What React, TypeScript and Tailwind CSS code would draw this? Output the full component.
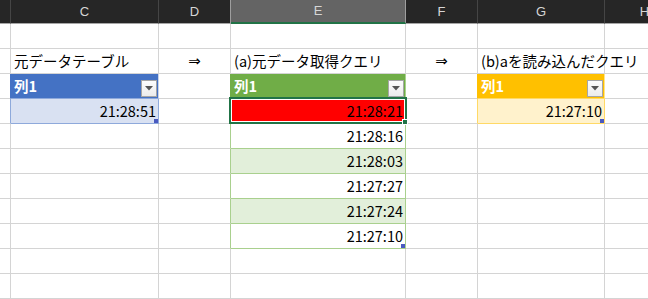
import React from 'react';

// column widths including the 1px gridline on the right
const widths = ['w-[11px]', 'w-[148px]', 'w-[72px]', 'w-[175px]', 'w-[72px]', 'w-[127px]', 'w-[80px]'];
const letters = ['', 'C', 'D', 'E', 'F', 'G', 'H'];

type CellDef = {
  bg?: string;
  r?: string;
  b?: string;
  text?: React.ReactNode;
  align?: 'left' | 'right' | 'center';
  over?: boolean;
  handle?: string;
  head?: boolean;
  arrow?: boolean;
};

const GRID = 'border-r-[#d4d4d4]';
const GRID_B = 'border-b-[#d4d4d4]';

function FilterButton() {
  return (
    <div className="ml-auto mr-[1px] mb-[1px] self-end w-[16px] h-[17px] shrink-0 border border-[#a6a6a6] bg-gradient-to-b from-[#fdfdfd] to-[#ececec] flex items-center justify-center">
      <svg width="8" height="5" viewBox="0 0 8 5">
        <path d="M0 0 H8 L4 4.5 Z" fill="#555" />
      </svg>
    </div>
  );
}

function Cell({ w, def }: { w: string; def: CellDef }) {
  const align =
    def.align === 'right' ? 'justify-end pr-[2px]' : def.align === 'center' ? 'justify-center' : 'justify-start pl-[3px]';
  return (
    <div
      className={`${w} h-[25px] shrink-0 border-r border-b ${def.r ?? GRID} ${def.b ?? GRID_B} ${def.bg ?? 'bg-white'} ${def.over ? 'relative z-10' : 'relative'} flex items-center ${align}`}
    >
      {def.text !== undefined && (
        <span
          className={`whitespace-nowrap leading-none ${def.head ? 'text-white font-bold' : 'text-black'} ${
            def.arrow ? "font-['DejaVu_Sans',sans-serif] text-[15px] text-[#333]" : ''
          }`}
        >
          {def.text}
        </span>
      )}
      {def.head && <FilterButton />}
      {def.handle && <div className={`absolute right-0 bottom-0 w-[4px] h-[4px] ${def.handle}`} />}
    </div>
  );
}

const blank: CellDef = {};

function buildRows(): CellDef[][] {
  const rows: CellDef[][] = [];
  for (let i = 0; i < 12; i++) rows.push([{}, {}, {}, {}, {}, {}, {}]);

  // titles
  rows[1][1] = { text: '元データテーブル' };
  rows[1][2] = { text: '⇒', align: 'center', arrow: true };
  rows[1][3] = { text: '(a)元データ取得クエリ' };
  rows[1][4] = { text: '⇒', align: 'center', arrow: true };
  rows[1][5] = { text: '(b)aを読み込んだクエリ', over: true };

  // table headers
  rows[2][0] = { r: 'border-r-[#4472c4]' };
  rows[2][1] = { bg: 'bg-[#4472c4]', r: 'border-r-[#c9d3e8]', b: 'border-b-[#8ea9db]', text: '列1', head: true };
  rows[2][2] = { r: 'border-r-[#70ad47]' };
  rows[2][3] = { bg: 'bg-[#70ad47]', r: 'border-r-[#a9d08e]', b: 'border-b-[#a9d08e]', text: '列1', head: true };
  rows[2][4] = { r: 'border-r-[#ffc000]' };
  rows[2][5] = { bg: 'bg-[#ffc000]', r: 'border-r-[#ffe48a]', b: 'border-b-[#ffd966]', text: '列1', head: true };

  // first data row
  rows[3][0] = { r: 'border-r-[#8ea9db]' };
  rows[3][1] = {
    bg: 'bg-[#d9e1f2]',
    r: 'border-r-[#8ea9db]',
    b: 'border-b-[#8ea9db]',
    text: '21:28:51',
    align: 'right',
    handle: 'bg-[#4a5ac0]',
  };
  rows[3][4] = { r: 'border-r-[#ffd966]' };
  rows[3][5] = {
    bg: 'bg-[#fff2cc]',
    r: 'border-r-[#ffd966]',
    b: 'border-b-[#ffd966]',
    text: '21:27:10',
    align: 'right',
    handle: 'bg-[#4a5ac0]',
  };

  const times = ['21:28:21', '21:28:16', '21:28:03', '21:27:27', '21:27:24', '21:27:10'];
  const fills = ['bg-[#ff0000]', 'bg-white', 'bg-[#e2efda]', 'bg-white', 'bg-[#e2efda]', 'bg-white'];
  times.forEach((t, k) => {
    rows[3 + k][2] = { r: 'border-r-[#a9d08e]' };
    rows[3 + k][3] = {
      bg: fills[k],
      r: 'border-r-[#a9d08e]',
      b: 'border-b-[#a9d08e]',
      text: t,
      align: 'right',
      handle: k === times.length - 1 ? 'bg-[#4a5ac0]' : undefined,
    };
  });
  return rows;
}

export default function App() {
  const rows = buildRows();
  return (
    <div className="relative w-[648px] h-[299px] overflow-hidden bg-white font-['Noto_Sans_CJK_JP','Noto_Sans',sans-serif] text-[14.5px]">
      {/* column letters */}
      <div className="flex h-[24px] bg-[#262626]">
        {letters.map((l, i) => {
          const sel = l === 'E';
          return (
            <div
              key={i}
              className={`${widths[i]} shrink-0 h-[24px] flex items-center justify-center font-['Liberation_Sans',sans-serif] text-[13px] text-[#d6d6d6] ${
                sel ? 'bg-[#646464] border-b-2 border-b-[#217346]' : 'border-b border-b-[#a6a6a6]'
              } ${i === 2 || sel ? 'border-r border-r-[#9e9e9e]' : 'border-r border-r-[#454545]'}`}
            >
              {l}
            </div>
          );
        })}
      </div>

      {rows.map((row, r) => (
        <div key={r} className="flex">
          {row.map((def, c) => (
            <Cell key={c} w={widths[c]} def={def ?? blank} />
          ))}
        </div>
      ))}

      {/* active cell outline */}
      <div className="absolute left-[229px] top-[97px] w-[178px] h-[27px] border-2 border-[#217346] shadow-[inset_0_0_0_1px_#ffffff] z-20" />
      <div className="absolute left-[402px] top-[119px] w-[6px] h-[6px] bg-[#217346] border border-white z-30" />
    </div>
  );
}
